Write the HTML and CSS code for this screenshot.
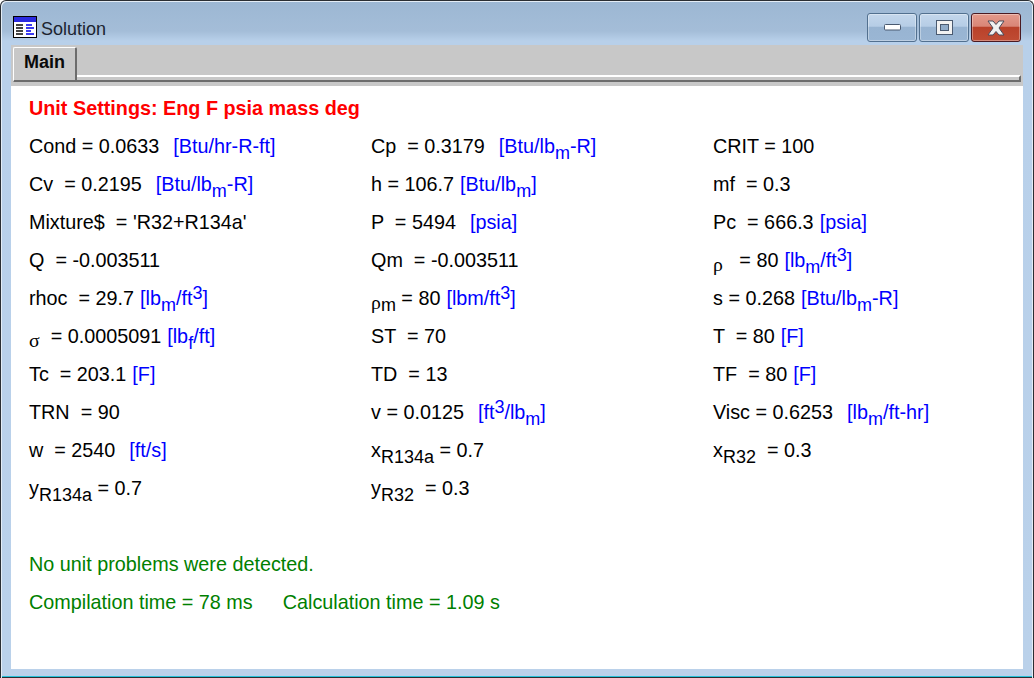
FILE: index.html
```html
<!DOCTYPE html>
<html lang="en">
<head>
    <meta charset="UTF-8">
    <title>Solution</title>
    <link rel="stylesheet" href="styles.css">
</head>
<body>
    <div class="window">
        <div class="titlebar">
            <svg class="app-icon" width="24" height="22" viewBox="0 0 24 22">
                <rect x="0.5" y="0.5" width="23" height="21" fill="#fff" stroke="#000"/>
                <rect x="1" y="1" width="22" height="5" fill="#2a2ae0"/>
                <path d="M3 9h7M3 12h7M3 15h7M3 18h7" stroke="#444" stroke-width="2"/>
                <path d="M13 9h6M13 12h8M13 15h5M13 18h8" stroke="#3a3af0" stroke-width="2"/>
            </svg>
            <span class="title">Solution</span>
            <div class="controls">
                <div class="ctl">
                    <svg width="17" height="7" viewBox="0 0 17 7"><rect x="0.5" y="0.5" width="16" height="5.5" rx="1" fill="#fff" stroke="#4a5a70"/></svg>
                </div>
                <div class="ctl">
                    <svg width="17" height="15" viewBox="0 0 17 15"><rect x="0.5" y="0.5" width="16" height="14" fill="#f2f2f2" stroke="#4a5a70"/><rect x="4.5" y="4.5" width="8" height="6" fill="#8fabc9" stroke="#4a5a70"/></svg>
                </div>
                <div class="ctl ctl-close">
                    <svg width="18" height="16" viewBox="0 0 18 16"><path d="M1 1h5l3 3.5L12 1h5l-5 7 5 7h-5l-3-3.5L6 15H1l5-7z" fill="#f0f0f0" stroke="#4a4a5a"/></svg>
                </div>
            </div>
        </div>
        <div class="tabstrip">
            <div class="tab">Main</div>
            <div class="tabline"></div>
        </div>
        <div class="sheet">
            <div class="settings">Unit Settings: Eng F psia mass deg</div>
            <div class="vars">
                <div class="row">Cond = 0.0633<span class="u wide">[Btu/hr-R-ft]</span></div>
                <div class="row">Cp  = 0.3179<span class="u wide">[Btu/lb<sub>m</sub>-R]</span></div>
                <div class="row">CRIT = 100</div>

                <div class="row">Cv  = 0.2195<span class="u wide">[Btu/lb<sub>m</sub>-R]</span></div>
                <div class="row">h = 106.7<span class="u">[Btu/lb<sub>m</sub>]</span></div>
                <div class="row">mf  = 0.3</div>

                <div class="row">Mixture$  = 'R32+R134a'</div>
                <div class="row">P  = 5494<span class="u wide">[psia]</span></div>
                <div class="row">Pc  = 666.3<span class="u">[psia]</span></div>

                <div class="row">Q  = -0.003511</div>
                <div class="row">Qm  = -0.003511</div>
                <div class="row"><span class="sym">ρ</span>   = 80<span class="u">[lb<sub>m</sub>/ft<sup>3</sup>]</span></div>

                <div class="row">rhoc  = 29.7<span class="u">[lb<sub>m</sub>/ft<sup>3</sup>]</span></div>
                <div class="row"><span class="sym">ρ</span><sub>m</sub> = 80<span class="u">[lbm/ft<sup>3</sup>]</span></div>
                <div class="row">s = 0.268<span class="u">[Btu/lb<sub>m</sub>-R]</span></div>

                <div class="row"><span class="sym">σ</span>  = 0.0005091<span class="u">[lb<sub>f</sub>/ft]</span></div>
                <div class="row">ST  = 70</div>
                <div class="row">T  = 80<span class="u">[F]</span></div>

                <div class="row">Tc  = 203.1<span class="u">[F]</span></div>
                <div class="row">TD  = 13</div>
                <div class="row">TF  = 80<span class="u">[F]</span></div>

                <div class="row">TRN  = 90</div>
                <div class="row">v = 0.0125<span class="u wide">[ft<sup>3</sup>/lb<sub>m</sub>]</span></div>
                <div class="row">Visc = 0.6253<span class="u wide">[lb<sub>m</sub>/ft-hr]</span></div>

                <div class="row">w  = 2540<span class="u wide">[ft/s]</span></div>
                <div class="row">x<sub>R134a</sub> = 0.7</div>
                <div class="row">x<sub>R32</sub>  = 0.3</div>

                <div class="row">y<sub>R134a</sub> = 0.7</div>
                <div class="row">y<sub>R32</sub>  = 0.3</div>
            </div>
            <div class="status">
                <div class="row">No unit problems were detected.</div>
                <div class="row">Compilation time = 78 ms<span class="calc">Calculation time = 1.09 s</span></div>
            </div>
        </div>
    </div>
</body>
</html>
```

FILE: styles.css
```css
html, body {
    margin: 0;
    padding: 0;
    height: 100%;
    overflow: hidden;
}

.window {
    box-sizing: border-box;
    width: 1034px;
    height: 678px;
    display: flex;
    flex-direction: column;
    padding: 0 10px 9px;
    background: linear-gradient(180deg, #9cb7d3 0, #a4bdd8 30px, #b8d0ea 40px, #bad1ea 100%);
    border: 1px solid #2a2e33;
    border-width: 1px 1px 0 1px;
    border-radius: 6px 6px 0 0;
    box-shadow: inset 1px 1px 0 #e4edf6, inset -1px 0 0 #e4edf6, inset 0 -1px 0 #2a2e33, inset 0 -2px 0 #26c0d8;
    font-family: "Liberation Sans", Arial, sans-serif;
}

/* title bar */
.titlebar {
    height: 44px;
    display: flex;
    align-items: flex-start;
    flex: none;
}

.app-icon {
    margin: 15px 0 0 2px;
}

.title {
    margin: 18px 0 0 4px;
    font-size: 18px;
    color: #1c2430;
}

.controls {
    margin: 12px 2px 0 auto;
    display: flex;
    gap: 2px;
}

.ctl {
    box-sizing: border-box;
    width: 50px;
    height: 29px;
    display: flex;
    align-items: center;
    justify-content: center;
    border: 1px solid #52708f;
    border-radius: 3px;
    background: linear-gradient(180deg, #c4d7ec 0, #b6cde6 45%, #98b4d2 50%, #9ab6d4 100%);
    box-shadow: inset 0 0 0 1px rgba(255, 255, 255, 0.35);
}

.ctl-close {
    border-color: #4a1a22;
    background: linear-gradient(180deg, #e49a8c 0, #d98677 45%, #b9412a 50%, #c04c34 100%);
}

/* tab strip */
.tabstrip {
    flex: none;
    height: 41px;
    background: #c8c8c8;
    display: flex;
    align-items: flex-end;
    padding: 0 2px 4px;
    box-sizing: border-box;
}

.tab {
    box-sizing: border-box;
    height: 35px;
    width: 64px;
    background: #c8c8c8;
    border: 1px solid #fff;
    border-right: 2px solid #6c6c6c;
    border-bottom: 2px solid #6c6c6c;
    border-radius: 2px 2px 0 0;
    padding-left: 10px;
    font-weight: bold;
    font-size: 18px;
    line-height: 28px;
    color: #0a0a0a;
}

.tabline {
    flex: 1;
    height: 7px;
    background: #c8c8c8;
    border-top: 2px solid #fff;
    border-right: 2px solid #6c6c6c;
    border-bottom: 2px solid #6c6c6c;
    box-sizing: border-box;
}

/* sheet */
.sheet {
    flex: 1;
    background: #fff;
    padding: 9px 0 0 18px;
    font-size: 19.8px;
    color: #000;
}

.settings {
    color: #f00;
    font-weight: bold;
    height: 32px;
    line-height: 27px;
}

.vars {
    display: grid;
    grid-template-columns: 342px 342px 300px;
    grid-auto-rows: 38px;
}

.row {
    white-space: pre;
    line-height: 38px;
    height: 38px;
}

.u {
    color: #00f;
    margin-left: 6px;
}

.wide {
    margin-left: 14px;
}

.calc {
    margin-left: 30px;
}

.sym {
    font-family: "Liberation Serif", serif;
    position: relative;
    top: 4px;
}

sub, sup {
    font-size: 18px;
    line-height: 0;
}

sub {
    vertical-align: -6px;
}

sup {
    vertical-align: 6px;
}

.status {
    margin-top: 38px;
    color: #008000;
}
```
